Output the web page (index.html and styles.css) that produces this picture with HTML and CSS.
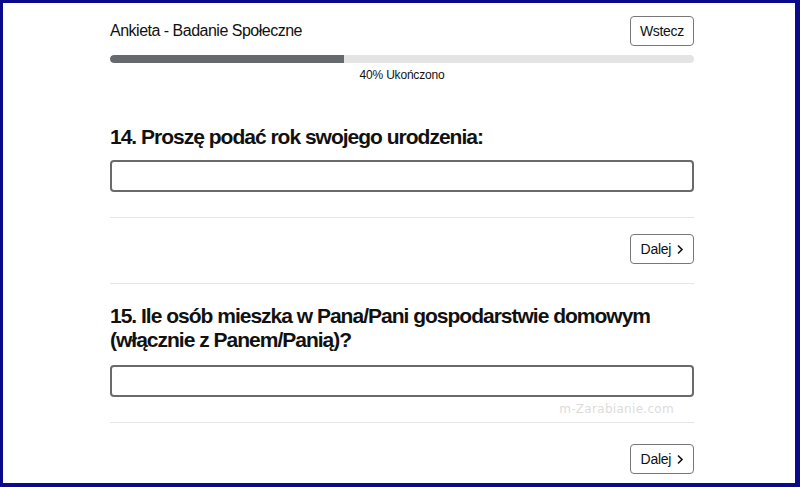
FILE: index.html
```html
<!DOCTYPE html>
<html lang="pl">
<head>
    <meta charset="UTF-8">
    <meta name="viewport" content="width=device-width, initial-scale=1.0">
    <title>Ankieta - Badanie Społeczne</title>
    <link rel="stylesheet" href="styles.css">
</head>
<body>

<div class="frame">
    <div class="survey">
        <div class="survey-header">
            <span class="survey-title">Ankieta - Badanie Społeczne</span>
            <button class="btn">Wstecz</button>
        </div>
        <div class="progress">
            <div class="progress-fill" style="width: 40%;"></div>
        </div>
        <div class="progress-label">40% Ukończono</div>

        <div class="question question-first">
            <h2 class="question-title">14. Proszę podać rok swojego urodzenia:</h2>
            <input class="answer" type="text">
        </div>
        <div class="question-nav">
            <button class="btn btn-next">Dalej
                <svg class="chevron" width="8" height="11" viewBox="0 0 8 11"><polyline points="2,1.5 6,5.5 2,9.5" fill="none" stroke="#111" stroke-width="1.6"/></svg>
            </button>
        </div>

        <div class="question">
            <h2 class="question-title">15. Ile osób mieszka w Pana/Pani gospodarstwie domowym (włącznie z Panem/Panią)?</h2>
            <input class="answer" type="text">
            <div class="watermark">m-Zarabianie.com</div>
        </div>
        <div class="question-nav">
            <button class="btn btn-next">Dalej
                <svg class="chevron" width="8" height="11" viewBox="0 0 8 11"><polyline points="2,1.5 6,5.5 2,9.5" fill="none" stroke="#111" stroke-width="1.6"/></svg>
            </button>
        </div>
    </div>
</div>

</body>
</html>
```

FILE: styles.css
```css
body {
    margin: 0;
    font-family: "Liberation Sans", Arial, sans-serif;
    color: #111;
    background-color: #0a0a8a;
}

.frame {
    box-sizing: border-box;
    width: 800px;
    height: 487px;
    border-style: solid;
    border-color: #0a0a8a;
    border-width: 3px 5px 4px 3px;
    background-color: #fff;
    overflow: hidden;
}

.survey {
    width: 584px;
    margin-left: 107px;
    padding-top: 13px;
}

.survey-header {
    display: flex;
    justify-content: space-between;
    align-items: center;
}

.survey-title {
    font-size: 16px;
    letter-spacing: -0.5px;
}

.btn {
    font-family: inherit;
    font-size: 14px;
    color: #111;
    background-color: #fff;
    border: 1px solid #777;
    border-radius: 4px;
    height: 30px;
    padding: 0 9px;
    letter-spacing: -0.3px;
}

.progress {
    margin-top: 9px;
    height: 8px;
    border-radius: 4px;
    background-color: #e4e4e4;
    overflow: hidden;
}

.progress-fill {
    height: 100%;
    background-color: #666a6e;
    border-radius: 4px 0 0 4px;
}

.progress-label {
    text-align: center;
    font-size: 12px;
    margin-top: 5px;
    letter-spacing: -0.2px;
}

.question {
    position: relative;
    padding-bottom: 25px;
    border-bottom: 1px solid #e6e6e6;
}

.question-title {
    margin: 20px 0 13px;
    font-size: 21px;
    line-height: 24px;
    font-weight: bold;
    letter-spacing: -1px;
}

.question-first .question-title {
    margin: 43px 0 11px;
}

.answer {
    display: block;
    box-sizing: border-box;
    width: 100%;
    height: 32px;
    border: 2px solid #6a6a6a;
    border-radius: 4px;
}

.question-nav {
    display: flex;
    justify-content: flex-end;
    padding: 16px 0 19px;
    border-bottom: 1px solid #e6e6e6;
}

.question-nav:last-child {
    padding-top: 21px;
    border-bottom: none;
}

.btn-next {
    display: flex;
    align-items: center;
    gap: 5px;
    padding: 0 9px 0 10px;
}

.chevron {
    display: block;
}

.watermark {
    position: absolute;
    right: 20px;
    bottom: 6px;
    font-family: "DejaVu Sans", sans-serif;
    font-size: 12px;
    color: #dcdcdc;
    letter-spacing: 0.3px;
}
```
